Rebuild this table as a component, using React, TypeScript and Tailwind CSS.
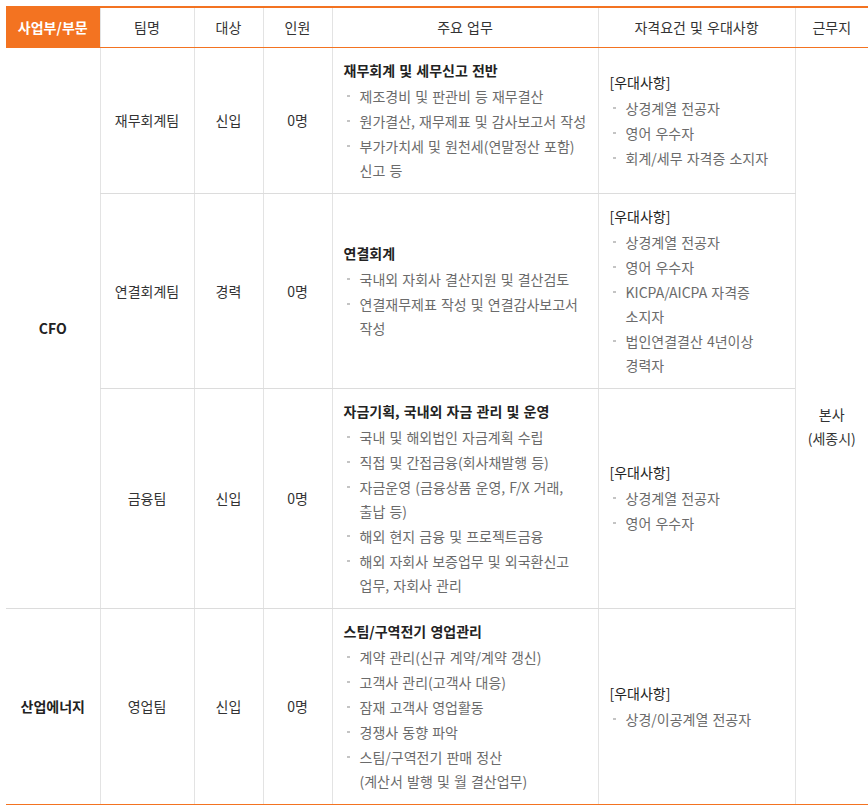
import React from "react";

type Row = {
  team: string;
  target: string;
  count: string;
  dutyTitle: string;
  duties: string[];
  prefs: string[];
};

const rows: Row[] = [
  {
    team: "재무회계팀",
    target: "신입",
    count: "0명",
    dutyTitle: "재무회계 및 세무신고 전반",
    duties: ["제조경비 및 판관비 등 재무결산", "원가결산, 재무제표 및 감사보고서 작성", "부가가치세 및 원천세(연말정산 포함)\n신고 등"],
    prefs: ["상경계열 전공자", "영어 우수자", "회계/세무 자격증 소지자"],
  },
  {
    team: "연결회계팀",
    target: "경력",
    count: "0명",
    dutyTitle: "연결회계",
    duties: ["국내외 자회사 결산지원 및 결산검토", "연결재무제표 작성 및 연결감사보고서\n작성"],
    prefs: ["상경계열 전공자", "영어 우수자", "KICPA/AICPA 자격증\n소지자", "법인연결결산 4년이상\n경력자"],
  },
  {
    team: "금융팀",
    target: "신입",
    count: "0명",
    dutyTitle: "자금기획, 국내외 자금 관리 및 운영",
    duties: [
      "국내 및 해외법인 자금계획 수립",
      "직접 및 간접금융(회사채발행 등)",
      "자금운영 (금융상품 운영, F/X 거래,\n출납 등)",
      "해외 현지 금융 및 프로젝트금융",
      "해외 자회사 보증업무 및 외국환신고\n업무, 자회사 관리",
    ],
    prefs: ["상경계열 전공자", "영어 우수자"],
  },
  {
    team: "영업팀",
    target: "신입",
    count: "0명",
    dutyTitle: "스팀/구역전기 영업관리",
    duties: [
      "계약 관리(신규 계약/계약 갱신)",
      "고객사 관리(고객사 대응)",
      "잠재 고객사 영업활동",
      "경쟁사 동향 파악",
      "스팀/구역전기 판매 정산\n(계산서 발행 및 월 결산업무)",
    ],
    prefs: ["상경/이공계열 전공자"],
  },
];

function Bullets({ items }: { items: string[] }) {
  return (
    <ul>
      {items.map((t, i) => (
        <li key={i} className="flex mt-px">
          <span className="w-4 shrink-0 pt-[11px] pl-[3px]">
            <span className="block w-[3px] h-[2px] bg-[#c4c4c4]" />
          </span>
          <span className="whitespace-pre text-[#6b6b6b]">{t}</span>
        </li>
      ))}
    </ul>
  );
}

export default function App() {
  const th = "h-10 p-0 font-normal text-[#333] text-center align-middle border-b border-b-[#f37321] border-l border-l-[#e3e3e3]";
  const td = "p-0 text-center align-middle text-[#333] border-l border-l-[#e3e3e3]";

  return (
    <div
      className="bg-white min-h-[810px] pt-[6px] pl-[6px] text-[14px] leading-6 [word-spacing:1px]"
      style={{ fontFamily: '"Noto Sans CJK KR", "Noto Sans", sans-serif' }}
    >
      <table className="table-fixed border-collapse w-[862px] border-t-2 border-t-[#f37321]">
        <colgroup>
          <col className="w-[94px]" />
          <col className="w-[94px]" />
          <col className="w-[69px]" />
          <col className="w-[69px]" />
          <col className="w-[266px]" />
          <col className="w-[197px]" />
          <col className="w-[73px]" />
        </colgroup>
        <thead>
          <tr>
            <th className="h-10 p-0 bg-[#f37321] text-white font-bold text-center align-middle border-b border-b-[#f37321]">사업부/부문</th>
            <th className={th}>팀명</th>
            <th className={th}>대상</th>
            <th className={th}>인원</th>
            <th className={th}>주요 업무</th>
            <th className={th}>자격요건 및 우대사항</th>
            <th className={th}>근무지</th>
          </tr>
        </thead>
        <tbody>
          {rows.map((r, i) => {
            const last = i === rows.length - 1;
            const bb = last ? "border-b border-b-[#f37321]" : "border-b border-b-[#dcdcdc]";
            return (
              <tr key={r.team}>
                {i === 0 && (
                  <td rowSpan={3} className="p-0 text-center align-middle font-bold text-[#222] border-b border-b-[#dcdcdc]">
                    CFO
                  </td>
                )}
                {last && <td className={"p-0 text-center align-middle font-bold text-[#222] " + bb}>산업에너지</td>}
                <td className={td + " " + bb}>{r.team}</td>
                <td className={td + " " + bb}>{r.target}</td>
                <td className={td + " " + bb}>{r.count}</td>
                <td className={"pt-[10px] pb-[11px] px-[11px] align-middle text-left border-l border-l-[#e3e3e3] " + bb}>
                  <div className="font-bold text-[#222] mb-[2px]">{r.dutyTitle}</div>
                  <Bullets items={r.duties} />
                </td>
                <td className={"pt-[10px] pb-[11px] px-[11px] align-middle text-left border-l border-l-[#e3e3e3] " + bb}>
                  <div className="text-[#222] mb-[2px]">[우대사항]</div>
                  <Bullets items={r.prefs} />
                </td>
                {i === 0 && (
                  <td rowSpan={4} className="p-0 text-center align-middle text-[#333] border-l border-l-[#e3e3e3] border-b border-b-[#f37321]">
                    본사
                    <br />
                    (세종시)
                  </td>
                )}
              </tr>
            );
          })}
        </tbody>
      </table>
    </div>
  );
}
